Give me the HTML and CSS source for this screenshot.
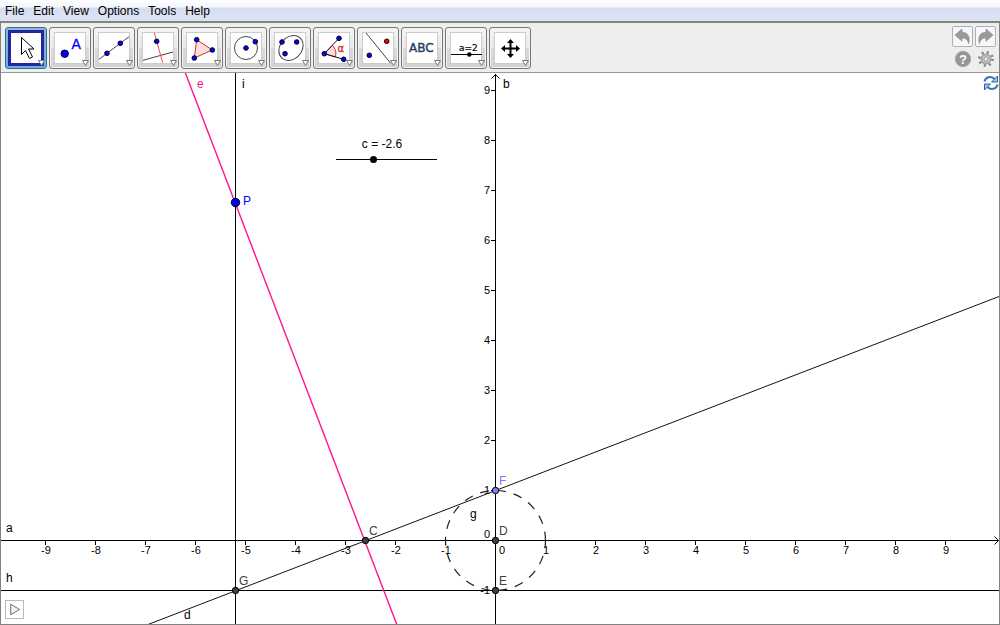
FILE: index.html
```html
<!DOCTYPE html>
<html lang="en">
<head>
<meta charset="utf-8">
<title>Geometry</title>
<link rel="stylesheet" href="styles.css">
</head>
<body>
<nav class="menu">
  <button>File</button><button>Edit</button><button>View</button><button>Options</button><button>Tools</button><button>Help</button>
</nav>
<div class="window">
  <header class="toolbar">
    <div class="tools">
      <button class="tool active" aria-label="Move"><svg viewBox="0 0 42 42"><path class="cursor" d="M16.500 10.500v17l4-4 4 8 3-1.500-4-8h5.500z"/><path class="drop" d="M33.500 33.500h6l-3 5z"/></svg></button>
      <button class="tool" aria-label="Point"><svg viewBox="0 0 42 42"><circle class="pt" cx="15.700" cy="26.700" r="3.700"/><text class="letter" x="22.500" y="21.500">A</text><path class="drop" d="M33.500 33.500h6l-3 5z"/></svg></button>
      <button class="tool" aria-label="Line"><svg viewBox="0 0 42 42"><path class="thin" d="M6 32.300L36 9.700"/><circle class="pt" cx="14" cy="26.300" r="2.300"/><circle class="pt" cx="27.300" cy="16.300" r="2.300"/><path class="drop" d="M33.500 33.500h6l-3 5z"/></svg></button>
      <button class="tool" aria-label="Perpendicular line"><svg viewBox="0 0 42 42"><path class="thin" d="M6 33.300L36 25"/><path class="thin red" d="M17.300 5.700L25.700 35.700"/><circle class="pt" cx="19.700" cy="14.300" r="2.300"/><path class="drop" d="M33.500 33.500h6l-3 5z"/></svg></button>
      <button class="tool" aria-label="Polygon"><svg viewBox="0 0 42 42"><path class="shape" d="M15.700 12.700L31.300 23 13.300 31z"/><circle class="pt" cx="15.700" cy="12.700" r="2.300"/><circle class="pt" cx="31.300" cy="23" r="2.300"/><circle class="pt" cx="13.300" cy="31" r="2.300"/><path class="drop" d="M33.500 33.500h6l-3 5z"/></svg></button>
      <button class="tool" aria-label="Circle"><svg viewBox="0 0 42 42"><circle class="thin" cx="21" cy="21" r="11.500"/><circle class="pt" cx="21" cy="21" r="2.300"/><circle class="pt" cx="30.300" cy="14.700" r="2.300"/><path class="drop" d="M33.500 33.500h6l-3 5z"/></svg></button>
      <button class="tool" aria-label="Conic"><svg viewBox="0 0 42 42"><ellipse class="thin" cx="22" cy="21" rx="13.500" ry="10.800" transform="rotate(-48 22 21)"/><circle class="pt" cx="13" cy="15" r="2.300"/><circle class="pt" cx="27.700" cy="15" r="2.300"/><circle class="pt" cx="16" cy="26.700" r="2.300"/><path class="drop" d="M33.500 33.500h6l-3 5z"/></svg></button>
      <button class="tool" aria-label="Angle"><svg viewBox="0 0 42 42"><path class="shape" d="M11.300 26.700L19.500 18.500A11.500 11.500 0 0 1 22.300 30z"/><path class="thin dark" d="M26 11.300L11.300 26.700l19.400 5.600"/><text class="alpha" x="24.500" y="25">α</text><circle class="pt" cx="11.300" cy="26.700" r="2.300"/><circle class="pt" cx="26" cy="11.300" r="2.300"/><circle class="pt" cx="30.700" cy="32.300" r="2.300"/><path class="drop" d="M33.500 33.500h6l-3 5z"/></svg></button>
      <button class="tool" aria-label="Reflect"><svg viewBox="0 0 42 42"><path class="thin" d="M9 6L33.500 36"/><circle class="pt redpt" cx="29.700" cy="14.300" r="2.300"/><circle class="pt" cx="12.300" cy="28.300" r="2.300"/><path class="drop" d="M33.500 33.500h6l-3 5z"/></svg></button>
      <button class="tool" aria-label="Text"><svg viewBox="0 0 42 42"><text class="abc" x="8" y="25">ABC</text><path class="drop" d="M33.500 33.500h6l-3 5z"/></svg></button>
      <button class="tool" aria-label="Slider"><svg viewBox="0 0 42 42"><text class="aeq" x="14" y="24">a=2</text><path class="black" d="M6 27.500h31"/><circle cx="24.300" cy="27.500" r="2.300"/><path class="drop" d="M33.500 33.500h6l-3 5z"/></svg></button>
      <button class="tool" aria-label="Move view"><svg viewBox="0 0 42 42"><path class="move" d="M14 21.500h15M21.500 14v15"/><path d="M21.500 12l3.500 4h-7zM21.500 31l3.500-4h-7zM12 21.500l4-3.500v7zM31 21.500l-4-3.500v7z"/><path class="drop" d="M33.500 33.500h6l-3 5z"/></svg></button>
    </div>
    <div class="side">
      <button class="hist" aria-label="Undo"><svg viewBox="0 0 20 20"><path class="arrow" d="M2 8.500L9.500 2v3.500c5.500 0 9 4 7 12-1-4-3-6-7-6v3.500z"/></svg></button>
      <button class="hist" aria-label="Redo"><svg viewBox="0 0 20 20"><path class="arrow" d="M18 8.500L10.500 2v3.500c-5.500 0-9 4-7 12 1-4 3-6 7-6v3.500z"/></svg></button>
      <button class="plain" aria-label="Help"><svg viewBox="0 0 18 18"><circle class="disc" cx="9" cy="9" r="7.700"/><text class="mark" x="9" y="13.500">?</text></svg></button>
      <button class="plain" aria-label="Settings"><svg viewBox="0 0 18 18"><circle class="teeth" cx="9" cy="9" r="6.500"/><circle class="gear" cx="9" cy="9" r="4.500"/><circle class="hole" cx="9" cy="9" r="2.200"/></svg></button>
    </div>
  </header>
  <main class="view">
    <svg class="graph" viewBox="1 73 998 551" preserveAspectRatio="xMinYMin slice">
      <path class="axis" d="M1 540.500H998M495.500 624V74M1 590.500H999M235.500 73V624"/>
      <path class="head" d="M994.500 536.500l4 4-4 4M491.500 78.500l4-4 4 4"/>
      <path class="axis" d="M45.500 540v5M95.500 540v5M145.500 540v5M195.500 540v5M245.500 540v5M295.500 540v5M345.500 540v5M395.500 540v5M445.500 540v5M545.500 540v5M595.500 540v5M645.500 540v5M695.500 540v5M745.500 540v5M795.500 540v5M845.500 540v5M895.500 540v5M945.500 540v5M491 90.500h5M491 140.500h5M491 190.500h5M491 240.500h5M491 290.500h5M491 340.500h5M491 390.500h5M491 440.500h5M491 490.500h5"/>
      <g class="num mid">
        <text x="46" y="554">-9</text><text x="96" y="554">-8</text><text x="146" y="554">-7</text><text x="196" y="554">-6</text><text x="246" y="554">-5</text><text x="296" y="554">-4</text><text x="346" y="554">-3</text><text x="396" y="554">-2</text><text x="446" y="554">-1</text><text x="502" y="554">0</text><text x="546" y="554">1</text><text x="596" y="554">2</text><text x="646" y="554">3</text><text x="696" y="554">4</text><text x="746" y="554">5</text><text x="796" y="554">6</text><text x="846" y="554">7</text><text x="896" y="554">8</text><text x="946" y="554">9</text>
      </g>
      <g class="num end">
        <text x="490" y="94">9</text><text x="490" y="144">8</text><text x="490" y="194">7</text><text x="490" y="244">6</text><text x="490" y="294">5</text><text x="490" y="344">4</text><text x="490" y="394">3</text><text x="490" y="444">2</text><text x="490" y="494">1</text><text x="490" y="538">0</text><text x="490" y="594">-1</text>
      </g>
      <path class="dash" d="M545.500 540.500A50 50 0 0 0 445.500 540.500A50 50 0 0 0 545.500 540.500"/>
      <path class="line" d="M148 624.500L999 296.500"/>
      <path class="pink" d="M185 72L397 625"/>
      <circle class="node" cx="235.500" cy="590.500" r="3.200"/><circle class="node" cx="365.500" cy="540.500" r="3.200"/><circle class="node" cx="495.500" cy="540.500" r="3.200"/><circle class="node" cx="495.500" cy="590.500" r="3.200"/>
      <circle class="node soft" cx="495.500" cy="490.500" r="3.200"/><circle class="node blue" cx="235.500" cy="202.500" r="4.200"/>
      <g class="name">
        <text x="6" y="532">a</text><text x="6" y="582">h</text><text x="184" y="619">d</text><text x="242" y="88">i</text><text x="503" y="88">b</text><text x="470" y="518">g</text>
        <text class="t-pink" x="197" y="88">e</text><text class="t-blue" x="243" y="205">P</text><text class="t-soft" x="499" y="485">F</text>
        <text class="t-gray" x="369" y="535">C</text><text class="t-gray" x="499" y="535">D</text><text class="t-gray" x="499" y="585">E</text><text class="t-gray" x="239" y="585">G</text>
      </g>
      <foreignObject x="333" y="136" width="107" height="28">
        <div class="slider"><label for="c">c = -2.6</label><input id="c" type="range" min="-10" max="10" step="0.1" value="-2.6"></div>
      </foreignObject>
    </svg>
    <button class="refresh" aria-label="Refresh"><svg viewBox="0 0 16 16"><path class="swirl" d="M1.500 6.500C2.500 1.500 8.500 1 11.500 4M14.500 9.500C13.500 14.500 7.500 15 4.500 12"/><path class="tip" d="M14.500 1v6H8.500zM1.500 15V9h6z"/></svg></button>
    <button class="play" aria-label="Play"><svg viewBox="0 0 18 18"><path class="tri" d="M5 3.500v11L14.500 9z"/></svg></button>
  </main>
</div>
</body>
</html>
```
FILE: styles.css
```css
* { box-sizing: border-box; }
body { margin: 0; height: 100vh; display: flex; flex-direction: column; font: 12px "Liberation Sans", Arial, sans-serif; color: #000; background: #fff; }
button { margin: 0; padding: 0; border: 0; background: none; font: inherit; color: inherit; }
svg { display: block; }
.menu { flex: none; height: 21px; padding: 0 5px; display: flex; align-items: center; gap: 9px; background: linear-gradient(#fff 0, #f4f6fc 7px, #d7ddf2 8px, #dfe4f4 100%); }
.window { flex: 1; min-height: 0; display: flex; flex-direction: column; border: 1px solid #828282; border-top-width: 2px; }
.toolbar { flex: none; height: 50px; padding: 4px 3px 0 4px; display: flex; justify-content: space-between; background: #eee; border-bottom: 1px solid #999; }
.tools { display: flex; gap: 2px; }
.tool { position: relative; width: 42px; height: 42px; border: 1px solid #777; border-radius: 3px; background: linear-gradient(#f3f3f3, #e8e8e8 50%, #dadada 50%, #d2d2d2); box-shadow: inset 0 0 0 1px #f4f4f4; }
.tool::before { content: ""; position: absolute; inset: 4px; background: #fff; border: 1px solid #ccc; }
.tool svg { position: absolute; inset: -1px; width: 42px; height: 42px; }
.tool.active { border-color: #376b8c; background: linear-gradient(#8cb8d4, #68b3db); box-shadow: none; }
.tool.active::before { inset: 2px; border: 3px solid #2424a4; }
.cursor { fill: #fff; stroke: #000; }
.drop { fill: #fff; stroke: #777; }
.pt { fill: #00f; stroke: #001; }
.redpt { fill: #f00; }
.thin { fill: none; stroke: #444; stroke-width: 1; }
.red { stroke: #f44; }
.dark { stroke: #111; }
.shape { fill: #fadddd; stroke: #dc3030; }
.letter { font-size: 14px; fill: #00f; stroke: #00f; stroke-width: .3px; }
.alpha { font: 10px "DejaVu Sans", sans-serif; fill: #e02020; stroke: #e02020; stroke-width: .3px; }
.abc { font: 12px "DejaVu Sans", sans-serif; fill: #234063; stroke: #234063; stroke-width: .4px; }
.aeq { font: 9px "DejaVu Sans", sans-serif; stroke: #000; stroke-width: .2px; }
.black { stroke: #000; }
.move { stroke: #000; stroke-width: 2; }
.side { display: grid; grid-template-columns: 21px 21px; grid-template-rows: 21px 18px; gap: 3px 2px; margin-top: -1px; justify-items: center; }
.hist { width: 21px; height: 21px; border: 1px solid #a9b1b9; border-radius: 2px; background: #f7f7f7; }
.hist svg { width: 19px; height: 19px; }
.arrow { fill: #999; stroke: #858585; stroke-width: .6; }
.plain svg { width: 18px; height: 18px; }
.disc { fill: #959595; stroke: #aaa; }
.mark { font-size: 13px; font-weight: bold; text-anchor: middle; fill: #fff; }
.teeth { fill: none; stroke: #888; stroke-width: 3; stroke-dasharray: 2 3.1; }
.gear { fill: #d8d8d8; stroke: #a5a5a5; stroke-width: 2; }
.hole { fill: #eee; stroke: #888; }
.view { position: relative; flex: 1; min-height: 0; overflow: hidden; background: #fff; }
.graph { width: 100%; height: 100%; }
.axis { stroke: #000; fill: none; shape-rendering: crispEdges; }
.head { stroke: #000; fill: none; }
.line { stroke: #111; stroke-width: 1; }
.pink { stroke: #ff1493; stroke-width: 1.4; }
.dash { fill: none; stroke: #222; stroke-width: 1.2; stroke-dasharray: 9 8; }
.node { fill: #404040; stroke: #000; }
.soft { fill: #7d7dff; }
.blue { fill: #00f; }
.num { font-size: 11px; }
.mid { text-anchor: middle; }
.end { text-anchor: end; }
.name { font-size: 12px; }
.t-pink { fill: #ff1493; }
.t-blue { fill: #00f; }
.t-soft { fill: #7d7dff; }
.t-gray { fill: #404040; }
.slider { display: flex; flex-direction: column; align-items: center; gap: 4px; }
.slider label { line-height: 16px; margin-right: 9px; }
.slider input { appearance: none; width: 100%; height: 7px; margin: 0; background: linear-gradient(#000, #000) center / 101px 1px no-repeat; }
.slider input::-webkit-slider-thumb { appearance: none; width: 7px; height: 7px; border-radius: 50%; background: #000; }
.refresh { position: absolute; top: 2px; right: 0; }
.refresh svg { width: 16px; height: 16px; }
.swirl { fill: none; stroke: #3f73b7; stroke-width: 2; }
.tip { fill: #9fc3ea; stroke: #2e62a8; }
.play { position: absolute; left: 4px; bottom: 5px; width: 19px; height: 19px; border: 1px solid #bbb; background: #fff; }
.play svg { width: 17px; height: 17px; }
.tri { fill: #f2f2f2; stroke: #666; }
```
